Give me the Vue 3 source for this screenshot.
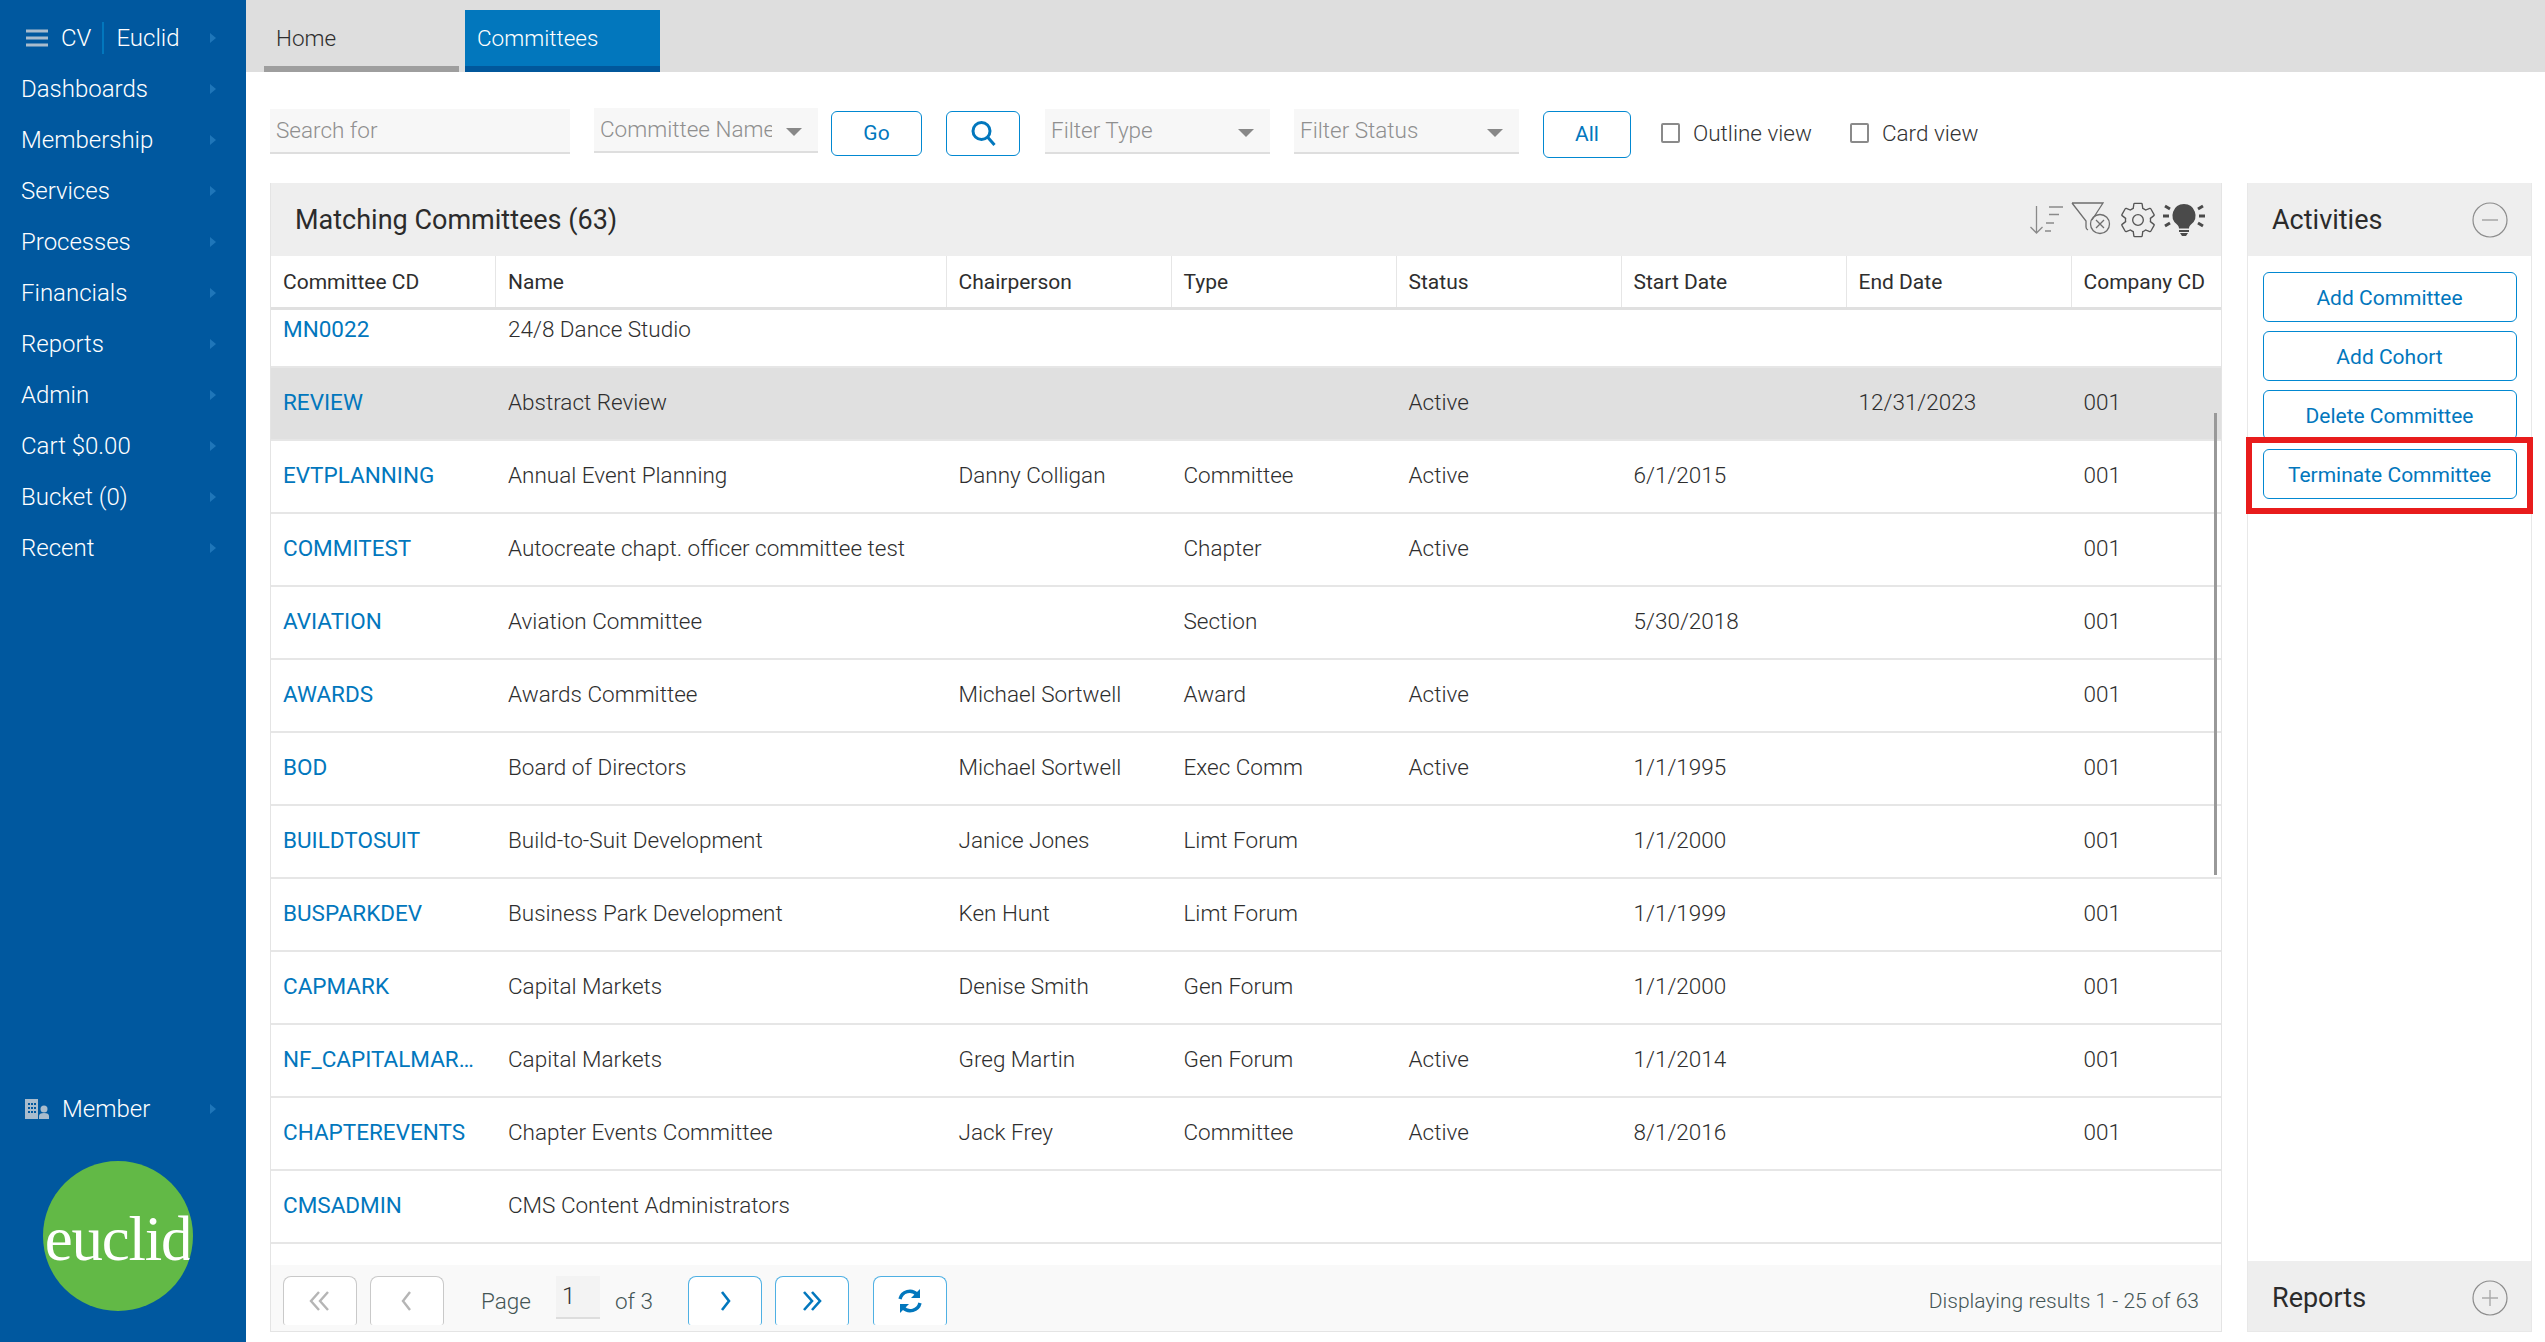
<script setup>
const navItems = ['Dashboards', 'Membership', 'Services', 'Processes', 'Financials', 'Reports', 'Admin', 'Cart $0.00', 'Bucket (0)', 'Recent']

const columns = ['Committee CD', 'Name', 'Chairperson', 'Type', 'Status', 'Start Date', 'End Date', 'Company CD']

const rows = [
  { cd: 'MN0022', name: '24/8 Dance Studio', chair: '', type: '', status: '', start: '', end: '', company: '' },
  { cd: 'REVIEW', name: 'Abstract Review', chair: '', type: '', status: 'Active', start: '', end: '12/31/2023', company: '001', selected: true },
  { cd: 'EVTPLANNING', name: 'Annual Event Planning', chair: 'Danny Colligan', type: 'Committee', status: 'Active', start: '6/1/2015', end: '', company: '001' },
  { cd: 'COMMITEST', name: 'Autocreate chapt. officer committee test', chair: '', type: 'Chapter', status: 'Active', start: '', end: '', company: '001' },
  { cd: 'AVIATION', name: 'Aviation Committee', chair: '', type: 'Section', status: '', start: '5/30/2018', end: '', company: '001' },
  { cd: 'AWARDS', name: 'Awards Committee', chair: 'Michael Sortwell', type: 'Award', status: 'Active', start: '', end: '', company: '001' },
  { cd: 'BOD', name: 'Board of Directors', chair: 'Michael Sortwell', type: 'Exec Comm', status: 'Active', start: '1/1/1995', end: '', company: '001' },
  { cd: 'BUILDTOSUIT', name: 'Build-to-Suit Development', chair: 'Janice Jones', type: 'Limt Forum', status: '', start: '1/1/2000', end: '', company: '001' },
  { cd: 'BUSPARKDEV', name: 'Business Park Development', chair: 'Ken Hunt', type: 'Limt Forum', status: '', start: '1/1/1999', end: '', company: '001' },
  { cd: 'CAPMARK', name: 'Capital Markets', chair: 'Denise Smith', type: 'Gen Forum', status: '', start: '1/1/2000', end: '', company: '001' },
  { cd: 'NF_CAPITALMARKETS', name: 'Capital Markets', chair: 'Greg Martin', type: 'Gen Forum', status: 'Active', start: '1/1/2014', end: '', company: '001' },
  { cd: 'CHAPTEREVENTS', name: 'Chapter Events Committee', chair: 'Jack Frey', type: 'Committee', status: 'Active', start: '8/1/2016', end: '', company: '001' },
  { cd: 'CMSADMIN', name: 'CMS Content Administrators', chair: '', type: '', status: '', start: '', end: '', company: '' }
]

const activities = ['Add Committee', 'Add Cohort', 'Delete Committee', 'Terminate Committee']
</script>

<template>
  <div class="app">
    <aside class="sidebar">
      <div class="nav-item brand">
        <svg class="burger" width="22" height="18" viewBox="0 0 22 18"><path d="M0 2h22M0 9h22M0 16h22" stroke="#a9bccd" stroke-width="3"/></svg>
        <span>CV</span>
        <i class="brand-sep"></i>
        <span>Euclid</span>
        <i class="arrow"></i>
      </div>
      <div v-for="item in navItems" :key="item" class="nav-item">
        <span>{{ item }}</span>
        <i class="arrow"></i>
      </div>
      <div class="nav-item member">
        <svg width="26" height="20" viewBox="0 0 26 20" fill="#a9bccd">
          <path d="M1 0h13v20H1z"/>
          <path d="M4 4h2v2H4zM7 4h2v2H7zM10 4h2v2h-2zM4 8h2v2H4zM7 8h2v2H7zM10 8h2v2h-2zM4 12h2v2H4zM7 12h2v2H7zM10 12h2v2h-2z" fill="#00589f"/>
          <circle cx="20" cy="10" r="3.5"/>
          <path d="M15 20v-3q0-3 5-3t5 3v3z"/>
        </svg>
        <span>Member</span>
        <i class="arrow"></i>
      </div>
      <div class="logo"><span>euclid</span></div>
    </aside>

    <main class="main">
      <nav class="tabs">
        <div class="tab">Home</div>
        <div class="tab active">Committees</div>
      </nav>

      <div class="toolbar">
        <div class="field search">Search for</div>
        <div class="field name-select"><span>Committee Name</span><i class="caret"></i></div>
        <button class="btn go">Go</button>
        <button class="btn find">
          <svg width="27" height="27" viewBox="0 0 27 27" fill="none" stroke="#0277bd" stroke-width="3"><circle cx="11.5" cy="11" r="8.5"/><path d="M17.5 17l7 8"/></svg>
        </button>
        <div class="field filter type"><span>Filter Type</span><i class="caret"></i></div>
        <div class="field filter status"><span>Filter Status</span><i class="caret"></i></div>
        <button class="btn all">All</button>
        <label class="check outline"><i class="box"></i>Outline view</label>
        <label class="check card"><i class="box"></i>Card view</label>
      </div>

      <div class="content">
        <section class="panel">
          <header class="panel-head">
            <h2>Matching Committees (63)</h2>
            <div class="head-icons">
              <svg width="36" height="32" viewBox="0 0 36 32" fill="none" stroke="#8a8a8a" stroke-width="1.3"><path d="M7.5 2v27M1.5 23l6 6 6-6M20 3h14M20 10.5h10M17 19h8M16 27h6"/></svg>
              <svg width="46" height="40" viewBox="0 0 46 40" fill="none" stroke="#6e6e6e" stroke-width="1.3"><path d="M2 3h31L22 20M2 3l14 18v6q0 2 2 3"/><circle cx="30" cy="24" r="9.5"/><path d="M26 20l8 8M34 20l-8 8"/></svg>
              <svg width="40" height="40" viewBox="0 0 24 24" fill="none" stroke="#555" stroke-width=".8"><path d="M19.43 12.98c.04-.32.07-.64.07-.98 0-.34-.03-.66-.07-.98l2.11-1.65c.19-.15.24-.42.12-.64l-2-3.46c-.09-.16-.26-.25-.44-.25-.06 0-.12.01-.17.03l-2.49 1c-.52-.4-1.08-.73-1.69-.98l-.38-2.65C14.46 2.18 14.25 2 14 2h-4c-.25 0-.46.18-.49.42l-.38 2.65c-.61.25-1.17.59-1.69.98l-2.49-1c-.06-.02-.12-.03-.18-.03-.17 0-.34.09-.43.25l-2 3.46c-.13.22-.07.49.12.64l2.11 1.65c-.04.32-.07.65-.07.98 0 .33.03.66.07.98l-2.11 1.65c-.19.15-.24.42-.12.64l2 3.46c.09.16.26.25.44.25.06 0 .12-.01.17-.03l2.49-1c.52.4 1.08.73 1.69.98l.38 2.65c.03.24.24.42.49.42h4c.25 0 .46-.18.49-.42l.38-2.65c.61-.25 1.17-.59 1.69-.98l2.49 1c.06.02.12.03.18.03.17 0 .34-.09.43-.25l2-3.46c.12-.22.07-.49-.12-.64l-2.11-1.65z"/><circle cx="12" cy="12" r="3.2"/></svg>
              <svg width="44" height="40" viewBox="0 0 44 40">
                <path d="M22 4a11.5 11.5 0 0 1 7 20.6c-1.5 1.3-2 2.4-2 4h-10c0-1.6-.5-2.7-2-4A11.5 11.5 0 0 1 22 4z" fill="#4a4a4a"/>
                <path d="M17 30h10v2H17zM18 33h8l-2 3h-4z" fill="#4a4a4a"/>
                <path d="M1 16h6M37 16h6M3 6l5 3M41 6l-5 3M3 26l5-3M41 26l-5-3" stroke="#4a4a4a" stroke-width="3" fill="none"/>
              </svg>
            </div>
          </header>

          <div class="grid-row head-row">
            <div v-for="col in columns" :key="col" class="cell">{{ col }}</div>
          </div>

          <div class="grid-body">
            <div class="grid-scroll">
              <div v-for="row in rows" :key="row.cd" class="grid-row data-row" :class="{ selected: row.selected }">
                <div class="cell link">{{ row.cd }}</div>
                <div class="cell">{{ row.name }}</div>
                <div class="cell">{{ row.chair }}</div>
                <div class="cell">{{ row.type }}</div>
                <div class="cell">{{ row.status }}</div>
                <div class="cell">{{ row.start }}</div>
                <div class="cell">{{ row.end }}</div>
                <div class="cell">{{ row.company }}</div>
              </div>
            </div>
            <i class="scrollbar"></i>
          </div>

          <footer class="pager">
            <button class="page-btn off">
              <svg width="24" height="24" viewBox="0 0 24 24" fill="none" stroke="#b5b5b5" stroke-width="2.4"><path d="M11 3L3 12l8 9M20 3l-8 9 8 9"/></svg>
            </button>
            <button class="page-btn off">
              <svg width="24" height="24" viewBox="0 0 24 24" fill="none" stroke="#b5b5b5" stroke-width="2.4"><path d="M15 3l-7 9 7 9"/></svg>
            </button>
            <span class="page-label">Page</span>
            <span class="page-input">1</span>
            <span class="page-of">of 3</span>
            <button class="page-btn next">
              <svg width="24" height="24" viewBox="0 0 24 24" fill="none" stroke="#0277bd" stroke-width="2.6"><path d="M9 3l7 9-7 9"/></svg>
            </button>
            <button class="page-btn">
              <svg width="24" height="24" viewBox="0 0 24 24" fill="none" stroke="#0277bd" stroke-width="2.6"><path d="M4 3l8 9-8 9M12 3l8 9-8 9"/></svg>
            </button>
            <button class="page-btn refresh">
              <svg width="28" height="28" viewBox="0 0 28 28" fill="none" stroke="#0277bd" stroke-width="3.4"><path d="M4 12A10 10 0 0 1 21 7.5"/><path d="M24 16A10 10 0 0 1 7 20.5"/><path d="M24 2v9h-9z" fill="#0277bd" stroke="none"/><path d="M4 26v-9h9z" fill="#0277bd" stroke="none"/></svg>
            </button>
            <span class="results">Displaying results 1 - 25 of 63</span>
          </footer>
        </section>

        <aside class="side">
          <header class="panel-head">
            <h2>Activities</h2>
            <svg class="circle" width="36" height="36" viewBox="0 0 36 36" fill="none"><circle cx="18" cy="18" r="17" stroke="#8c8c8c" stroke-width="1.2"/><path d="M10 18h16" stroke="#aaa" stroke-width="1.6"/></svg>
          </header>
          <div class="side-actions">
            <button v-for="a in activities" :key="a" class="btn action">{{ a }}</button>
            <i class="highlight"></i>
          </div>
          <footer class="panel-head reports">
            <h2>Reports</h2>
            <svg class="circle" width="36" height="36" viewBox="0 0 36 36" fill="none"><circle cx="18" cy="18" r="17" stroke="#8c8c8c" stroke-width="1.2"/><path d="M10 18h16M18 10v16" stroke="#aaa" stroke-width="1.4"/></svg>
          </footer>
        </aside>
      </div>
    </main>
  </div>
</template>

<style>
body {
  background: #fff;
}
</style>

<style scoped>
.app {
  display: flex;
  height: 100vh;
  font-family: Roboto, "Liberation Sans", sans-serif;
  font-weight: 300;
  font-size: 22.5px;
  color: #2e2e2e;
  overflow: hidden;
}

button {
  font-family: inherit;
  cursor: pointer;
  background: #fff;
}

/* sidebar */
.sidebar {
  width: 246px;
  flex: none;
  background: #00589f;
  color: #fff;
  display: flex;
  flex-direction: column;
  padding-top: 12px;
  box-sizing: border-box;
}

.nav-item {
  height: 51px;
  display: flex;
  align-items: center;
  padding-left: 21px;
  position: relative;
  font-size: 24px;
}

.arrow {
  position: absolute;
  left: 210px;
  top: 21px;
  width: 0;
  height: 0;
  border-left: 6px solid #1f76b9;
  border-top: 5px solid transparent;
  border-bottom: 5px solid transparent;
}

.brand {
  padding-left: 26px;
}

.burger {
  margin-right: 13px;
}

.brand-sep {
  width: 2px;
  height: 32px;
  background: #0277bd;
  margin: 0 12px 0 11px;
}

.member {
  margin-top: auto;
  padding-left: 24px;
}

.member span {
  margin-left: 12px;
}

.logo {
  width: 150px;
  height: 150px;
  border-radius: 50%;
  background: #62b946;
  margin: 27px 0 31px 43px;
  display: flex;
  align-items: center;
  justify-content: center;
  overflow: hidden;
}

.logo span {
  font-family: "Liberation Serif", serif;
  font-weight: 400;
  font-size: 63px;
  letter-spacing: -1.2px;
  margin-top: 6px;
}

/* main column */
.main {
  flex: 1;
  min-width: 0;
  display: flex;
  flex-direction: column;
}

.tabs {
  height: 71.5px;
  flex: none;
  background: #dedede;
  display: flex;
  align-items: flex-end;
  gap: 6px;
  padding-left: 18px;
}

.tab {
  width: 195px;
  height: 61.5px;
  box-sizing: border-box;
  border-bottom: 6.5px solid #9e9e9e;
  padding: 0 0 0 12px;
  display: flex;
  align-items: center;
}

.tab.active {
  background: #0277bd;
  border-bottom-color: #01579b;
  color: #fff;
}

.toolbar {
  height: 111.5px;
  flex: none;
  box-sizing: border-box;
  display: flex;
  align-items: flex-start;
  padding: 37px 0 0 24px;
}

.field {
  height: 45px;
  box-sizing: border-box;
  background: #f7f7f7;
  border-bottom: 2px solid #dedede;
  color: #8f8f8f;
  display: flex;
  align-items: center;
  padding-left: 6px;
  position: relative;
}

.search {
  width: 300px;
}

.name-select {
  width: 224px;
  margin: -1px 0 0 24px;
}

.name-select span {
  width: 172px;
  overflow: hidden;
  white-space: nowrap;
}

.caret {
  position: absolute;
  right: 16px;
  top: 20px;
  border-top: 8px solid #888;
  border-left: 8px solid transparent;
  border-right: 8px solid transparent;
}

.btn {
  border: 1.5px solid #0288d1;
  border-radius: 6px;
  color: #0277bd;
  font-size: 21px;
  font-weight: 400;
  padding: 0;
}

.go {
  width: 91px;
  height: 45px;
  margin: 2px 0 0 13px;
}

.find {
  width: 74px;
  height: 45px;
  margin: 2px 0 0 24px;
  display: flex;
  align-items: center;
  justify-content: center;
}

.filter {
  width: 225px;
  margin-left: 25px;
}

.status {
  margin-left: 24px;
}

.all {
  width: 88px;
  height: 47px;
  margin: 2px 0 0 24px;
}

.check {
  display: flex;
  align-items: center;
  height: 47px;
  margin: 1px 0 0 30px;
  color: #333;
}

.check.card {
  margin-left: 38px;
}

.box {
  width: 15px;
  height: 16px;
  border: 2px solid #8a8a8a;
  border-radius: 2px;
  margin-right: 13px;
}

/* panels */
.content {
  flex: 1;
  min-height: 0;
  display: flex;
  gap: 25px;
  margin: 0 13px 10px 24px;
}

.panel {
  width: 1952px;
  flex: none;
  box-sizing: border-box;
  border: 1px solid #e4e4e4;
  border-top: 0;
  display: flex;
  flex-direction: column;
}

.panel-head {
  height: 73px;
  flex: none;
  box-sizing: border-box;
  background: #eee;
  display: flex;
  align-items: center;
  justify-content: space-between;
  padding: 0 0 0 24px;
}

.panel-head h2 {
  margin: 0;
  font-size: 27px;
  font-weight: 400;
  color: #2b2b2b;
}

.head-icons {
  display: flex;
  align-items: center;
  gap: 4px;
  margin-right: 15px;
}

.head-icons svg:nth-child(2) {
  margin: 0 -2px 0 1px;
}

.grid-row {
  display: grid;
  grid-template-columns: 225px 450.5px 225px 225px 225px 225px 225px 1fr;
}

.head-row {
  height: 54px;
  flex: none;
  box-sizing: border-box;
  border-bottom: 3px solid #e0e0e0;
  font-size: 21px;
  font-weight: 400;
}

.head-row .cell {
  border-right: 1px solid #e6e6e6;
  display: flex;
  align-items: center;
  padding-left: 12px;
}

.head-row .cell:last-child {
  border-right: 0;
}

.grid-body {
  flex: 1;
  min-height: 0;
  overflow: hidden;
  position: relative;
}

.grid-scroll {
  margin-top: -15px;
}

.data-row {
  height: 73px;
  box-sizing: border-box;
  border-bottom: 2px solid #e6e6e6;
  padding-bottom: 3px;
  align-items: center;
}

.data-row.selected {
  background: #e0e0e0;
}

.cell {
  padding: 0 12px;
  box-sizing: border-box;
  white-space: nowrap;
  overflow: hidden;
  text-overflow: ellipsis;
}

.link {
  color: #0277bd;
  font-weight: 400;
  padding-right: 12px;
}

.scrollbar {
  position: absolute;
  right: 4px;
  top: 103px;
  width: 3px;
  height: 462px;
  background: #999;
}

/* pager */
.pager {
  height: 66px;
  flex: none;
  box-sizing: border-box;
  background: #f9f9f9;
  display: flex;
  align-items: flex-start;
  padding: 11px 22px 0 12px;
  overflow: hidden;
  color: #455;
}

.page-btn {
  width: 74px;
  height: 49px;
  flex: none;
  margin-right: 13px;
  border: 1.5px solid #4fb0e3;
  border-bottom: 0;
  border-radius: 8px 8px 3px 3px;
  padding: 0;
  display: flex;
  align-items: center;
  justify-content: center;
}

.page-btn.off {
  border-color: #c9c9c9;
}

.page-label {
  margin: 12px 0 0 24px;
}

.page-input {
  width: 44px;
  height: 43px;
  box-sizing: border-box;
  background: #f3f3f3;
  border-bottom: 2px solid #ddd;
  margin-left: 25px;
  padding: 6px 0 0 6px;
  color: #333;
  font-size: 24px;
}

.page-of {
  margin: 12px 0 0 15px;
}

.next {
  margin-left: 35.5px;
}

.refresh {
  margin-left: 11px;
}

.results {
  margin: 13px 0 0 auto;
  font-size: 21px;
}

/* activities */
.side {
  flex: 1;
  min-width: 0;
  box-sizing: border-box;
  border: 1px solid #e8e8e8;
  border-top: 0;
  display: flex;
  flex-direction: column;
}

.side .panel-head {
  padding-right: 23px;
}

.side-actions {
  flex: 1;
  display: flex;
  flex-direction: column;
  align-items: center;
  gap: 9px;
  padding-top: 16px;
  position: relative;
}

.action {
  width: 254px;
  height: 50px;
  flex: none;
  font-size: 21px;
  padding-top: 2px;
}

.highlight {
  position: absolute;
  left: -2px;
  top: 181px;
  width: 287px;
  height: 77px;
  box-sizing: border-box;
  border: 6px solid #e81c1c;
}

.reports {
  height: 70px;
  padding-top: 3px;
}
</style>
